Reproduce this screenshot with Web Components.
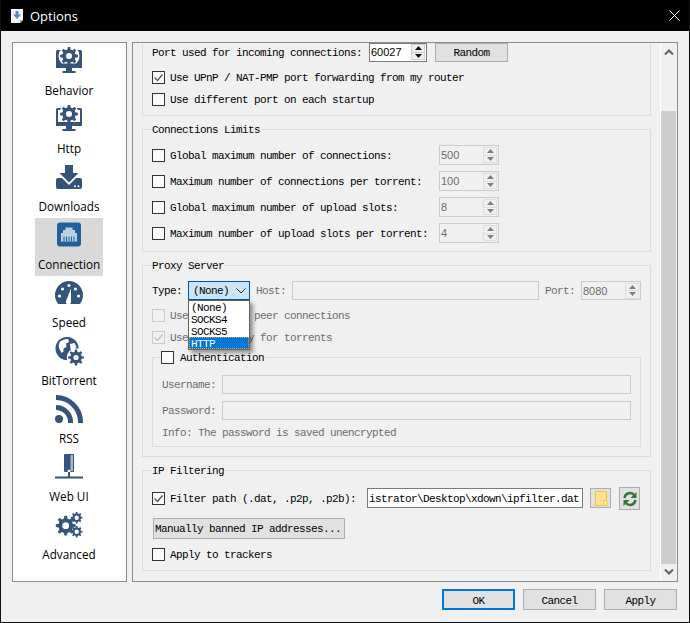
<!DOCTYPE html>
<html>
<head>
<meta charset="utf-8">
<title>Options</title>
<style>
  html, body { margin: 0; padding: 0; background: #f0f0f0; }
  body { font: 11px/14px "Liberation Mono", monospace; letter-spacing: -.6px; color: #000; }
  qb-row > span { padding-top: 1px; }
</style>
</head>
<body>
<qb-window>
  <qb-nav slot="nav" icon="behavior" label="Behavior"></qb-nav>
  <qb-nav slot="nav" icon="http" label="Http"></qb-nav>
  <qb-nav slot="nav" icon="downloads" label="Downloads"></qb-nav>
  <qb-nav slot="nav" icon="connection" label="Connection" active></qb-nav>
  <qb-nav slot="nav" icon="speed" label="Speed"></qb-nav>
  <qb-nav slot="nav" icon="bittorrent" label="BitTorrent"></qb-nav>
  <qb-nav slot="nav" icon="rss" label="RSS"></qb-nav>
  <qb-nav slot="nav" icon="webui" label="Web UI"></qb-nav>
  <qb-nav slot="nav" icon="advanced" label="Advanced"></qb-nav>

  <qb-group style="margin-top:-10px;--p:8px 9px 6px">
    <qb-row>
      <span style="width:217px">Port used for incoming connections:</span>
      <qb-spin value="60027" style="width:58px;height:19px"></qb-spin>
      <qb-btn style="width:73px;height:19px;margin-left:8px">Random</qb-btn>
    </qb-row>
    <qb-row style="margin-top:5px"><qb-check checked>Use UPnP / NAT-PMP port forwarding from my router</qb-check></qb-row>
    <qb-row style="margin-top:2px"><qb-check>Use different port on each startup</qb-check></qb-row>
  </qb-group>

  <qb-group title="Connections Limits" style="margin-top:13px;--p:15px 9px 8px">
    <qb-row><qb-check style="width:287px">Global maximum number of connections:</qb-check><qb-spin value="500" disabled></qb-spin></qb-row>
    <qb-row style="margin-top:6px"><qb-check style="width:287px">Maximum number of connections per torrent:</qb-check><qb-spin value="100" disabled></qb-spin></qb-row>
    <qb-row style="margin-top:6px"><qb-check style="width:287px">Global maximum number of upload slots:</qb-check><qb-spin value="8" disabled></qb-spin></qb-row>
    <qb-row style="margin-top:6px"><qb-check style="width:287px">Maximum number of upload slots per torrent:</qb-check><qb-spin value="4" disabled></qb-spin></qb-row>
  </qb-group>

  <qb-group title="Proxy Server" style="margin-top:13px;--p:15px 9px 9px">
    <qb-row style="height:19px">
      <span style="width:36px">Type:</span>
      <qb-combo value="(None)" selected="HTTP" options="(None),SOCKS4,SOCKS5,HTTP"></qb-combo>
      <span style="width:36px;margin-left:6px;color:#6d6d6d">Host:</span>
      <qb-input disabled style="width:247px"></qb-input>
      <span style="width:36px;margin-left:6px;color:#6d6d6d">Port:</span>
      <qb-spin value="8080" disabled style="height:19px"></qb-spin>
    </qb-row>
    <qb-row style="margin-top:5px"><qb-check disabled>Use proxy for peer connections</qb-check></qb-row>
    <qb-row style="margin-top:2px"><qb-check disabled checked>Use proxy only for torrents</qb-check></qb-row>
    <qb-group title="Authentication" check style="margin-top:10px;--p:17px 9px 5px;--legend-x:7px">
      <qb-row style="height:19px"><span style="width:60px;color:#6d6d6d">Username:</span><qb-input disabled style="flex:1"></qb-input></qb-row>
      <qb-row style="height:19px;margin-top:7px"><span style="width:60px;color:#6d6d6d">Password:</span><qb-input disabled style="flex:1"></qb-input></qb-row>
      <qb-row style="height:18px;margin-top:3px;color:#6d6d6d"><span>Info: The password is saved unencrypted</span></qb-row>
    </qb-group>
  </qb-group>

  <qb-group title="IP Filtering" style="margin-top:13px;--p:16px 9px 6px">
    <qb-row style="height:23px;align-items:flex-start">
      <qb-check checked style="width:215px;margin-top:1px;height:20px">Filter path (.dat, .p2p, .p2b):</qb-check>
      <qb-input style="width:216px;height:20px;margin-top:1px">istrator\Desktop\xdown\ipfilter.dat</qb-input>
      <qb-tool icon="folder" style="width:21px;height:20px;margin:1px 0 0 7px"></qb-tool>
      <qb-tool icon="refresh" style="width:21px;height:23px;margin-left:8px"></qb-tool>
    </qb-row>
    <qb-btn align="left" style="width:192px;height:21px;margin:8px 0 0 1px">Manually banned IP addresses...</qb-btn>
    <qb-row style="margin-top:5px"><qb-check>Apply to trackers</qb-check></qb-row>
  </qb-group>

  <qb-btn slot="footer" primary style="width:73px;height:21px;--pt:2px">OK</qb-btn>
  <qb-btn slot="footer" style="width:73px;height:21px;--pt:2px">Cancel</qb-btn>
  <qb-btn slot="footer" style="width:73px;height:21px;--pt:2px">Apply</qb-btn>
</qb-window>

<script>
// builds a cog outline, with a round hole in the middle
function gear(cx, cy, ro, ri, n, hole) {
  let d = '';
  const step = Math.PI * 2 / n;
  const pt = (r, a) => (cx + r * Math.cos(a)).toFixed(2) + ' ' + (cy + r * Math.sin(a)).toFixed(2);
  for (let i = 0; i < n; i++) {
    const a = i * step - Math.PI / 2;
    d += (i ? 'L' : 'M') + pt(ri, a - step * .3) + 'L' + pt(ro, a - step * .17) + 'L' + pt(ro, a + step * .17) + 'L' + pt(ri, a + step * .3);
  }
  d += 'Z';
  if (hole) d += `M${cx - hole} ${cy}a${hole} ${hole} 0 1 0 ${hole * 2} 0a${hole} ${hole} 0 1 0 ${-hole * 2} 0Z`;
  return d;
}

const BLUE = '#34547a';
const cog = (cx, cy, ro, ri, n, hole) => `<path fill="${BLUE}" fill-rule="evenodd" d="${gear(cx, cy, ro, ri, n, hole)}"/>`;
const stand = `<rect x="11" y="22" width="6" height="3" fill="${BLUE}"/><rect x="7.5" y="25" width="13" height="2" fill="${BLUE}"/>`;

const NAV_ICONS = {
  behavior: `<rect x="1" y="4" width="26" height="18" rx="1.5" fill="${BLUE}"/>${stand}
    <circle cx="14" cy="10" r="10.5" fill="#fff"/><rect x="1" y="17.5" width="26" height="4.5" fill="${BLUE}"/>${cog(14, 10, 9, 6.8, 8, 3)}`,
  http: `<rect x="1" y="4" width="26" height="18" rx="1.5" fill="${BLUE}"/><rect x="3" y="6" width="22" height="12" fill="#fff"/>${stand}
    <circle cx="14" cy="10" r="10" fill="#fff"/>${cog(14, 10, 9, 6.8, 8, 3)}<rect x="1" y="18" width="26" height="4" fill="${BLUE}"/>`,
  downloads: `<path fill="${BLUE}" d="M10 3h8v8h5.5L14 20.5 4.5 11H10z"/>
    <path fill="${BLUE}" d="M1 18q0-2 2-2h4l7 7 7-7h4q2 0 2 2v7q0 2-2 2H3q-2 0-2-2z"/>
    <circle cx="20" cy="24.3" r="1" fill="#fff"/><circle cx="23.5" cy="24.3" r="1" fill="#fff"/>`,
  connection: `<rect x="2" y="2.5" width="24" height="24" rx="3" fill="#23609a"/>
    <path fill="#bcd0e4" d="M6 13h2v-3h2.5V7.5h7V10H20v3h2v8.5H6z"/>
    <path stroke="#23609a" stroke-width="1" d="M9 16.5v5M11.5 16.5v5M14 16.5v5M16.5 16.5v5M19 16.5v5"/>`,
  speed: `<path fill="${BLUE}" d="M3.2 26A14 14 0 1 1 24.8 26Z"/>
    <g fill="#fff"><circle cx="4.5" cy="18" r="1.6"/><circle cx="7.5" cy="11" r="1.6"/><circle cx="14" cy="7.5" r="1.6"/><circle cx="20.5" cy="11" r="1.6"/><circle cx="23.5" cy="18" r="1.6"/>
    <path d="M16 10.5l-4.8 12a2.6 2.6 0 1 0 4.8 .9z"/></g>`,
  bittorrent: `<circle cx="12" cy="12.5" r="11.5" fill="${BLUE}"/>
    <path fill="#fff" d="M5 5.5q4-3 8-2.5l1 3-3 1.5.5 3.5-3 1.5v3l-2 1.5-2.5-5q-1-3 1-6.5zM15 8l4.5-1 2 4-3 2.5-1 3-2-3.5z"/>
    <circle cx="21" cy="21.5" r="9.3" fill="#fff"/>${cog(21, 21.5, 8, 5.8, 8, 2.6)}`,
  rss: `<circle cx="4" cy="25" r="4" fill="${BLUE}"/>
    <path fill="none" stroke="${BLUE}" stroke-width="5" d="M1 13.5A14.5 14.5 0 0 1 15.5 28v1M1 3.5A24.5 24.5 0 0 1 25.5 28v1"/>`,
  webui: `<rect x="9" y="2" width="10" height="18" rx="1" fill="${BLUE}"/><rect x="15.5" y="3" width="2.5" height="16" fill="#a9b8c9"/>
    <circle cx="14" cy="19" r="1.5" fill="#fff"/><rect x="13" y="20" width="2" height="5" fill="${BLUE}"/><rect x="0" y="24.5" width="28" height="2" fill="${BLUE}"/>`,
  advanced: `${cog(10.7, 15.7, 10, 7.4, 8, 3.4)}${cog(21.7, 7.7, 5.8, 4.3, 8, 2.2)}${cog(21.7, 21.7, 5.8, 4.3, 8, 2.2)}`,
};

const TOOL_ICONS = {
  folder: `<svg width="16" height="16" viewBox="0 0 16 16"><rect x="2.5" y="1.5" width="11" height="14" fill="#ffe38f" stroke="#eec53d"/><rect x="11" y="10.5" width="3" height="5" fill="#fff3c4" stroke="#eec53d"/></svg>`,
  refresh: `<svg width="16" height="16" viewBox="0 0 16 16"><path fill="none" stroke="#35743a" stroke-width="2.4" d="M2.5 7A5.5 5.5 0 0 1 12.5 4.5M13.5 9A5.5 5.5 0 0 1 3.5 11.5"/><path fill="#35743a" d="M14.5 1v6h-6zM1.5 15V9h6z"/></svg>`,
};

class QbWindow extends HTMLElement {
  constructor() {
    super();
    this.attachShadow({ mode: 'open' });
    this.shadowRoot.innerHTML = `
      <style>
        :host { display: flex; flex-direction: column; width: 690px; height: 623px; box-sizing: border-box; background: #f0f0f0; border: 1px solid #111; border-top: 0; overflow: hidden; }
        .title { display: flex; align-items: center; height: 31px; flex: none; margin: 0 -1px; background: #000; color: #fff; font: 13px "Open Sans", sans-serif; letter-spacing: 0; }
        .title svg.app { margin-left: 10px; margin-right: 6px; }
        .title svg.close { margin-left: auto; margin-right: 10px; }
        .body { display: flex; gap: 5px; padding: 11px 11px 0; height: 540px; flex: none; }
        nav { display: block; width: 115px; box-sizing: border-box; border: 1px solid #8a8d94; background: #fff; padding: 1px 0 0 22px; }
        main { display: flex; width: 546px; box-sizing: border-box; border: 1px solid #8a8d94; }
        .content { width: 527px; box-sizing: border-box; padding: 0 9px; overflow: hidden; }
        .bar { width: 17px; box-sizing: border-box; border-left: 1px solid #fff; display: flex; flex-direction: column; align-items: flex-start; }
        .bar svg { margin: 5px 0 0 3px; flex: none; }
        .thumb { width: 15px; height: 453px; background: #cdcdcd; margin-top: 55px; flex: none; }
        .bar svg.down { margin-top: 4px; }
        footer { display: flex; justify-content: flex-end; gap: 8px; padding: 7px 12px 0 0; }
      </style>
      <div class="title">
        <svg class="app" width="14" height="16" viewBox="0 0 14 16"><path fill="#f2f4f8" d="M1 1h12v11l-3 3H1z"/><path fill="#aab4c4" d="M13 12h-3v3z"/><path fill="#5e88c0" d="M5.5 3h3v3.5H11L7 11 3 6.5h2.5z"/></svg>
        <span>Options</span>
        <svg class="close" width="11" height="11" viewBox="0 0 11 11"><path stroke="#fff" stroke-width="1" d="M.5 .5l10 10M10.5 .5l-10 10"/></svg>
      </div>
      <div class="body">
        <nav><slot name="nav"></slot></nav>
        <main>
          <div class="content"><slot></slot></div>
          <div class="bar">
            <svg width="10" height="8" viewBox="0 0 10 8"><path fill="none" stroke="#606060" stroke-width="2" d="M1 6.5l4-4 4 4"/></svg>
            <div class="thumb"></div>
            <svg class="down" width="10" height="8" viewBox="0 0 10 8"><path fill="none" stroke="#606060" stroke-width="2" d="M1 1.5l4 4 4-4"/></svg>
          </div>
        </main>
      </div>
      <footer><slot name="footer"></slot></footer>`;
  }
}

class QbNav extends HTMLElement {
  connectedCallback() {
    if (this.shadowRoot) return;
    this.attachShadow({ mode: 'open' });
    this.shadowRoot.innerHTML = `
      <style>
        :host { display: flex; flex-direction: column; align-items: center; width: 68px; height: 58px; font: 11.7px/16px "Open Sans", sans-serif; letter-spacing: 0; white-space: nowrap; }
        :host([active]) { background: #d9d9d9; }
        svg { margin-top: 2px; overflow: visible; flex: none; }
        span { margin-top: 6px; }
      </style>
      <svg width="28" height="30" viewBox="0 0 28 30">${NAV_ICONS[this.getAttribute('icon')]}</svg>
      <span>${this.getAttribute('label')}</span>`;
  }
}

class QbGroup extends HTMLElement {
  connectedCallback() {
    if (this.shadowRoot) return;
    this.attachShadow({ mode: 'open' });
    const title = this.getAttribute('title');
    const legend = title ? `<div class="legend">${this.hasAttribute('check') ? '<qb-check></qb-check>' : ''}<span>${title}</span></div>` : '';
    this.shadowRoot.innerHTML = `
      <style>
        :host { display: block; border: 1px solid #dcdcdc; }
        .legend { display: flex; align-items: center; gap: 1px; width: fit-content; height: 14px; margin: -8px 0 -6px var(--legend-x, 8px); padding: 0 1px; background: #f0f0f0; }
        .legend span { padding-top: 2px; }
        .body { padding: var(--p, 0); }
      </style>
      ${legend}
      <div class="body"><slot></slot></div>`;
  }
}

class QbRow extends HTMLElement {
  constructor() {
    super();
    this.attachShadow({ mode: 'open' });
    this.shadowRoot.innerHTML = `
      <style>:host { display: flex; align-items: center; height: 20px; white-space: nowrap; }</style>
      <slot></slot>`;
  }
}

class QbCheck extends HTMLElement {
  connectedCallback() {
    if (this.shadowRoot) return;
    this.attachShadow({ mode: 'open' });
    const on = this.hasAttribute('checked');
    this.shadowRoot.innerHTML = `
      <style>
        :host { display: flex; align-items: center; gap: 5px; white-space: nowrap; }
        :host([disabled]) { color: #6d6d6d; }
        .box { display: flex; width: 13px; height: 13px; box-sizing: border-box; border: 1px solid #333; background: #fbfbfb; flex: none; }
        :host([disabled]) .box { border-color: #cccccc; background: #f0f0f0; }
        slot { display: block; padding-top: 1px; }
        path { stroke: #555; }
        :host([disabled]) path { stroke: #c4c4c4; }
      </style>
      <span class="box">${on ? '<svg width="11" height="11" viewBox="0 0 11 11"><path fill="none" stroke-width="1.3" d="M1.5 5.5l3 3 5-6"/></svg>' : ''}</span>
      <slot></slot>`;
  }
}

class QbSpin extends HTMLElement {
  connectedCallback() {
    if (this.shadowRoot) return;
    this.attachShadow({ mode: 'open' });
    this.shadowRoot.innerHTML = `
      <style>
        :host { display: flex; align-items: center; width: 60px; height: 20px; box-sizing: border-box; border: 1px solid #7a7a7a; background: #fff; font: 11px "Liberation Sans", sans-serif; letter-spacing: 0; flex: none; }
        :host([disabled]) { border: 1px solid #cccccc; background: #f0f0f0; color: #6d6d6d; }
        .val { flex: 1; padding-left: 1px; }
        .btns { display: flex; flex-direction: column; width: 14px; height: 16px; margin-right: 1px; gap: 0; }
        .btns i { flex: 1; display: flex; align-items: center; justify-content: center; background: #f0f0f0; border: 1px solid #cfcfcf; box-sizing: border-box; }
        .btns i + i { border-top: 0; }
        :host([disabled]) .btns i { border-color: #dddddd; }
        path { fill: #111; }
        :host([disabled]) path { fill: #7f7f7f; }
      </style>
      <span class="val">${this.getAttribute('value')}</span>
      <span class="btns">
        <i><svg width="7" height="4" viewBox="0 0 7 4"><path d="M3.5 0L7 4H0z"/></svg></i>
        <i><svg width="7" height="4" viewBox="0 0 7 4"><path d="M0 0h7L3.5 4z"/></svg></i>
      </span>`;
  }
}

class QbBtn extends HTMLElement {
  constructor() {
    super();
    this.attachShadow({ mode: 'open' });
    this.shadowRoot.innerHTML = `
      <style>
        :host { display: flex; align-items: center; justify-content: center; box-sizing: border-box; border: 1px solid #adadad; background: #e1e1e1; white-space: nowrap; flex: none; }
        :host([primary]) { border: 2px solid #0078d7; }
        :host([align=left]) { justify-content: flex-start; padding-left: 1px; }
        slot { display: block; padding-top: var(--pt, 1px); }
      </style>
      <slot></slot>`;
  }
}

class QbInput extends HTMLElement {
  constructor() {
    super();
    this.attachShadow({ mode: 'open' });
    this.shadowRoot.innerHTML = `
      <style>
        :host { display: flex; align-items: center; height: 19px; box-sizing: border-box; border: 1px solid #7a7a7a; background: #fff; padding-left: 1px; overflow: hidden; white-space: nowrap; flex: none; }
        :host([disabled]) { border-color: #cccccc; background: #f0f0f0; }
        slot { display: block; padding-top: 1px; }
      </style>
      <slot></slot>`;
  }
}

class QbTool extends HTMLElement {
  connectedCallback() {
    if (this.shadowRoot) return;
    this.attachShadow({ mode: 'open' });
    this.shadowRoot.innerHTML = `
      <style>:host { display: flex; align-items: center; justify-content: center; box-sizing: border-box; border: 1px solid #adadad; background: #e1e1e1; flex: none; }</style>
      ${TOOL_ICONS[this.getAttribute('icon')]}`;
  }
}

class QbCombo extends HTMLElement {
  connectedCallback() {
    if (this.shadowRoot) return;
    this.attachShadow({ mode: 'open' });
    const selected = this.getAttribute('selected');
    const items = this.getAttribute('options').split(',').map(o =>
      `<div class="item${o === selected ? ' sel' : ''}">${o}</div>`).join('');
    this.shadowRoot.innerHTML = `
      <style>
        :host { display: flex; align-items: center; position: relative; width: 62px; height: 19px; box-sizing: border-box; border: 1px solid #005499; background: #cce4f7; padding-left: 4px; flex: none; }
        .val { padding-top: 1px; }
        svg { margin-left: auto; margin-right: 3px; }
        .popup { position: absolute; left: -1px; top: 18px; width: 62px; box-sizing: border-box; border: 1px solid #646464; background: #fff; box-shadow: 3px 3px 4px rgba(0,0,0,.4); z-index: 5; }
        .item { height: 12px; line-height: 14px; padding-left: 2px; overflow: hidden; }
        .sel { background: #0078d7; color: #fff; outline: 1px dotted #f0a030; outline-offset: -1px; }
      </style>
      <span class="val">${this.getAttribute('value')}</span>
      <svg width="10" height="6" viewBox="0 0 10 6"><path fill="none" stroke="#333" d="M.5 .5l4.5 4.5 4.5-4.5"/></svg>
      <div class="popup">${items}</div>`;
  }
}

customElements.define('qb-window', QbWindow);
customElements.define('qb-nav', QbNav);
customElements.define('qb-group', QbGroup);
customElements.define('qb-row', QbRow);
customElements.define('qb-check', QbCheck);
customElements.define('qb-spin', QbSpin);
customElements.define('qb-btn', QbBtn);
customElements.define('qb-input', QbInput);
customElements.define('qb-tool', QbTool);
customElements.define('qb-combo', QbCombo);
</script>
</body>
</html>
